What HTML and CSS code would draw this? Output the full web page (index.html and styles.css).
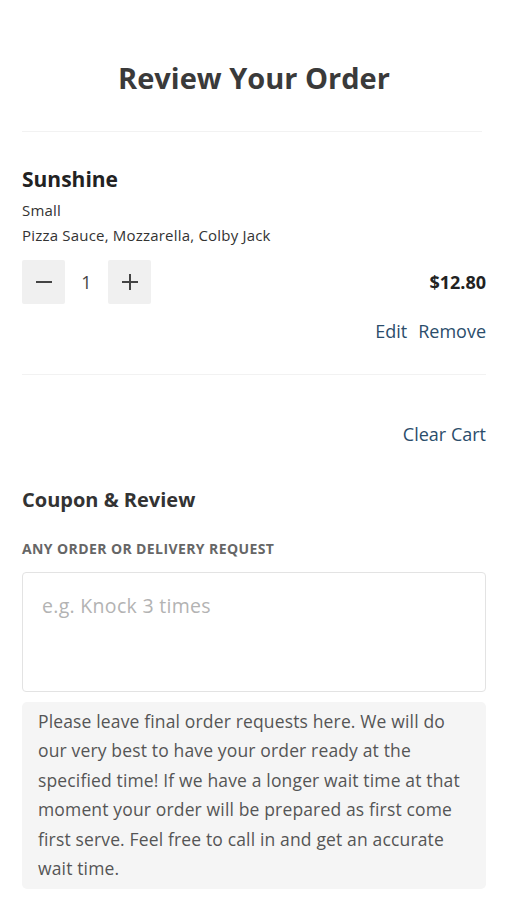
FILE: index.html
```html
<!DOCTYPE html>
<html>
<head>
<meta charset="utf-8">
<link rel="stylesheet" href="styles.css">
</head>
<body>
<div class="page">
  <h1 class="title">Review Your Order</h1>
  <div class="divider top"></div>
  <div class="item">
    <div class="item-name">Sunshine</div>
    <div class="item-size">Small</div>
    <div class="item-toppings">Pizza Sauce, Mozzarella, Colby Jack</div>
    <div class="qty-row">
      <div class="qty">
        <button class="qbtn" aria-label="decrease"><svg width="18" height="18" viewBox="0 0 18 18"><path d="M1 9h16" stroke="#444" stroke-width="2" fill="none"/></svg></button>
        <span class="qnum">1</span>
        <button class="qbtn" aria-label="increase"><svg width="18" height="18" viewBox="0 0 18 18"><path d="M1 9h16M9 1v16" stroke="#444" stroke-width="2" fill="none"/></svg></button>
      </div>
      <div class="price">$12.80</div>
    </div>
    <div class="actions"><a class="link">Edit</a><a class="link">Remove</a></div>
  </div>
  <div class="divider"></div>
  <div class="clear-row"><a class="link clear">Clear Cart</a></div>
  <h2 class="section">Coupon &amp; Review</h2>
  <div class="label">ANY ORDER OR DELIVERY REQUEST</div>
  <textarea class="request" placeholder="e.g. Knock 3 times"></textarea>
  <div class="note">Please leave final order requests here. We will do our very best to have your order ready at the specified time! If we have a longer wait time at that moment your order will be prepared as first come first serve. Feel free to call in and get an accurate wait time.</div>
</div>
</body>
</html>
```
FILE: styles.css
```css
* { box-sizing: border-box; }
html, body { margin: 0; padding: 0; background: #fff; }
body { font-family: "Open Sans", "Liberation Sans", sans-serif; color: #333; }
.page { padding: 0 21px 0 22px; }
.title {
  margin: 0;
  padding-top: 58px;
  height: 131px;
  text-align: center;
  font-size: 29px;
  font-weight: 700;
  color: #3a3a3a;
}
.divider { height: 1px; background: #f2f2f2; }
.divider.top { margin-right: 4px; }
.item { padding-top: 33px; }
.item-name { font-size: 21px; font-weight: 700; color: #222; line-height: 28px; }
.item-size { font-size: 15px; color: #333; margin-top: 8px; line-height: 19px; letter-spacing: 0.2px; }
.item-toppings { font-size: 15px; color: #333; margin-top: 6px; line-height: 19px; letter-spacing: 0.2px; }
.qty-row { display: flex; align-items: center; justify-content: space-between; margin-top: 15px; }
.qty { display: flex; align-items: center; }
.qbtn {
  width: 43px; height: 44px; border: 0; padding: 0; margin: 0;
  background: #f0f0f0; border-radius: 2px;
  display: flex; align-items: center; justify-content: center;
}
.qnum { width: 43px; text-align: center; font-size: 18px; color: #444; }
.price { font-size: 18px; font-weight: 700; color: #222; }
.actions { display: flex; justify-content: flex-end; gap: 11px; margin-top: 16px; height: 54px; }
.link { color: #2b4d6b; font-size: 18px; line-height: 22px; }
.clear-row { display: flex; justify-content: flex-end; padding-top: 48px; height: 113px; }
.clear { font-size: 18px; }
.section { margin: 0; font-size: 20px; font-weight: 700; color: #333; line-height: 24px; }
.label { margin-top: 28px; font-size: 14px; font-weight: 700; color: #666; letter-spacing: 0.4px; line-height: 17px; }
.request {
  display: block; width: 100%; height: 120px; margin-top: 15px;
  border: 1px solid #e3e3e3; border-radius: 4px; resize: none;
  padding: 19px 19px; font-family: inherit; font-size: 19.5px; letter-spacing: 0.3px; color: #333;
}
.request::placeholder { color: #b3b3b3; }
.note {
  margin-top: 10px; background: #f5f5f5; border-radius: 5px;
  padding: 5px 14px 6px 16px; font-size: 17.5px; line-height: 29.4px; color: #555; letter-spacing: 0.15px;
}
```
